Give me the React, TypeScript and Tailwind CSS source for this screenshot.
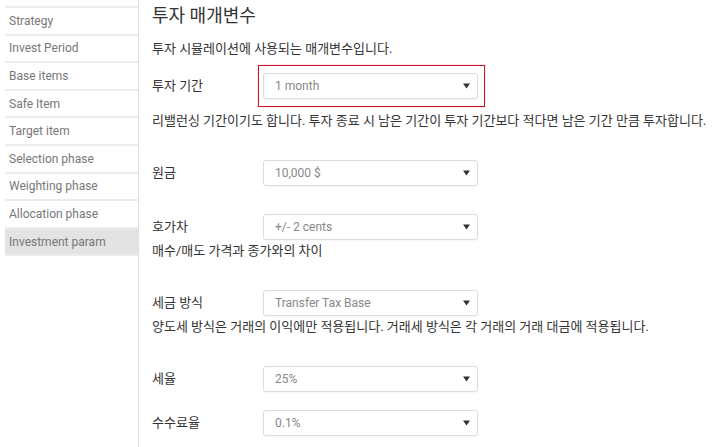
import React from "react";

const menu = [
  "Strategy",
  "Invest Period",
  "Base items",
  "Safe Item",
  "Target item",
  "Selection phase",
  "Weighting phase",
  "Allocation phase",
  "Investment param",
];

function Caret() {
  return (
    <svg width="7" height="6" viewBox="0 0 7 6" className="shrink-0">
      <path d="M0 0.5h7L3.5 5.5z" fill="#333" />
    </svg>
  );
}

function Select({ value }: { value: string }) {
  return (
    <div className="flex h-[26px] w-[215px] items-center justify-between rounded-[3px] border border-[#dcdcdc] bg-white pl-[11px] pr-[7px] text-[12px] text-[#888] shadow-[0_1px_1px_rgba(0,0,0,0.04)]">
      <span>{value}</span>
      <Caret />
    </div>
  );
}

function Row({ label, value, className = "" }: { label: string; value: string; className?: string }) {
  return (
    <div className={`flex items-center ${className}`}>
      <div className="w-[111px] text-[13px] text-[#333]">{label}</div>
      <Select value={value} />
    </div>
  );
}

export default function App() {
  const active = "Investment param";

  return (
    <div className="flex h-[447px] w-[720px] overflow-hidden bg-white font-['Roboto','Noto_Sans_CJK_KR',sans-serif]">
      {/* Sidebar */}
      <div className="w-[139px] shrink-0 border-r border-[#dedede] pl-[5px] pt-[6px]">
        <div className="border-t-2 border-[#ececec]">
          {menu.map((m) => (
            <div
              key={m}
              className={`flex h-[27.6px] items-center border-b-2 border-[#ececec] pl-[4px] text-[12px] text-[#777] ${
                m === active ? "bg-[#e3e3e3]" : "bg-white"
              }`}
            >
              {m}
            </div>
          ))}
        </div>
      </div>

      {/* Main */}
      <div className="flex-1 pl-[13px] pt-[4px] text-[#333]">
        <h1 className="h-[24px] text-[18px] leading-[24px] font-normal">투자 매개변수</h1>
        <p className="mt-[12px] text-[13px] leading-[18px]">투자 시뮬레이션에 사용되는 매개변수입니다.</p>

        <div className="mt-[7px] flex items-center">
          <div className="w-[106px] text-[13px]">투자 기간</div>
          <div className="border border-[#d0112b] pb-[7px] pl-[4px] pr-[6px] pt-[7px] shadow-[0_0_1px_rgba(220,30,50,0.5)]">
            <Select value="1 month" />
          </div>
        </div>
        <p className="mt-[5px] text-[13px] leading-[18px]">
          리밸런싱 기간이기도 합니다. 투자 종료 시 남은 기간이 투자 기간보다 적다면 남은 기간 만큼 투자합니다.
        </p>

        <Row className="mt-[30px]" label="원금" value="10,000 $" />

        <Row className="mt-[28px]" label="호가차" value="+/- 2 cents" />
        <p className="mt-[2px] text-[13px] leading-[18px]">매수/매도 가격과 종가와의 차이</p>

        <Row className="mt-[30px]" label="세금 방식" value="Transfer Tax Base" />
        <p className="mt-[2px] text-[13px] leading-[18px]">
          양도세 방식은 거래의 이익에만 적용됩니다. 거래세 방식은 각 거래의 거래 대금에 적용됩니다.
        </p>

        <Row className="mt-[30px]" label="세율" value="25%" />
        <Row className="mt-[18px]" label="수수료율" value="0.1%" />
      </div>
    </div>
  );
}
